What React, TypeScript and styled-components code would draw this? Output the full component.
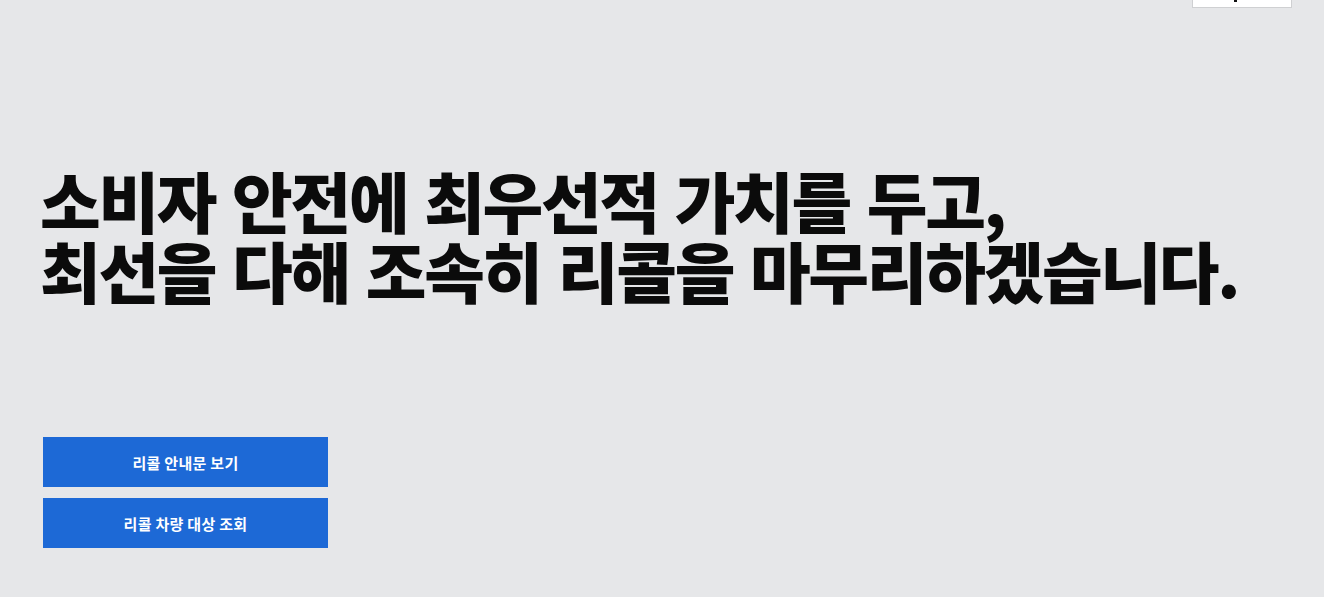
import React from 'react';
import styled, { createGlobalStyle } from 'styled-components';

const GlobalStyle = createGlobalStyle`
  html, body {
    margin: 0;
    padding: 0;
    background: #e6e7e9;
    font-family: "Noto Sans CJK KR", "Noto Sans", sans-serif;
  }
`;

const Page = styled.div`
  position: relative;
  width: 100%;
  height: 597px;
  overflow: hidden;
  box-sizing: border-box;
  padding: 164px 0 0 40px;
`;

const LangBox = styled.div`
  position: absolute;
  top: -32px;
  right: 32px;
  width: 100px;
  height: 40px;
  background: #fff;
  border: 1px solid #cfd0d2;
  box-sizing: border-box;
  display: flex;
  justify-content: center;
  align-items: flex-end;
`;

const Dot = styled.span`
  width: 3px;
  height: 3px;
  margin-bottom: 5px;
  margin-right: 14px;
  background: #111;
`;

const Title = styled.h1`
  margin: 0;
  font-size: 66px;
  line-height: 70px;
  font-weight: 900;
  letter-spacing: -2.3px;
  word-spacing: 4px;
  color: #0b0b0b;
`;

const Buttons = styled.div`
  display: flex;
  flex-direction: column;
  gap: 11px;
  margin-top: 133px;
  padding-left: 3px;
`;

const Button = styled.a`
  width: 285px;
  height: 50px;
  background: #1d69d6;
  color: #fff;
  font-size: 15px;
  font-weight: 700;
  display: flex;
  align-items: center;
  justify-content: center;
  text-decoration: none;
  letter-spacing: 0.3px;
`;

export default function App() {
  return (
    <>
      <GlobalStyle />
      <Page>
        <LangBox>
          <Dot />
        </LangBox>
        <Title>
          소비자 안전에 최우선적 가치를 두고,
          <br />
          최선을 다해 조속히 리콜을 마무리하겠습니다.
        </Title>
        <Buttons>
          <Button href="#">리콜 안내문 보기</Button>
          <Button href="#">리콜 차량 대상 조회</Button>
        </Buttons>
      </Page>
    </>
  );
}
